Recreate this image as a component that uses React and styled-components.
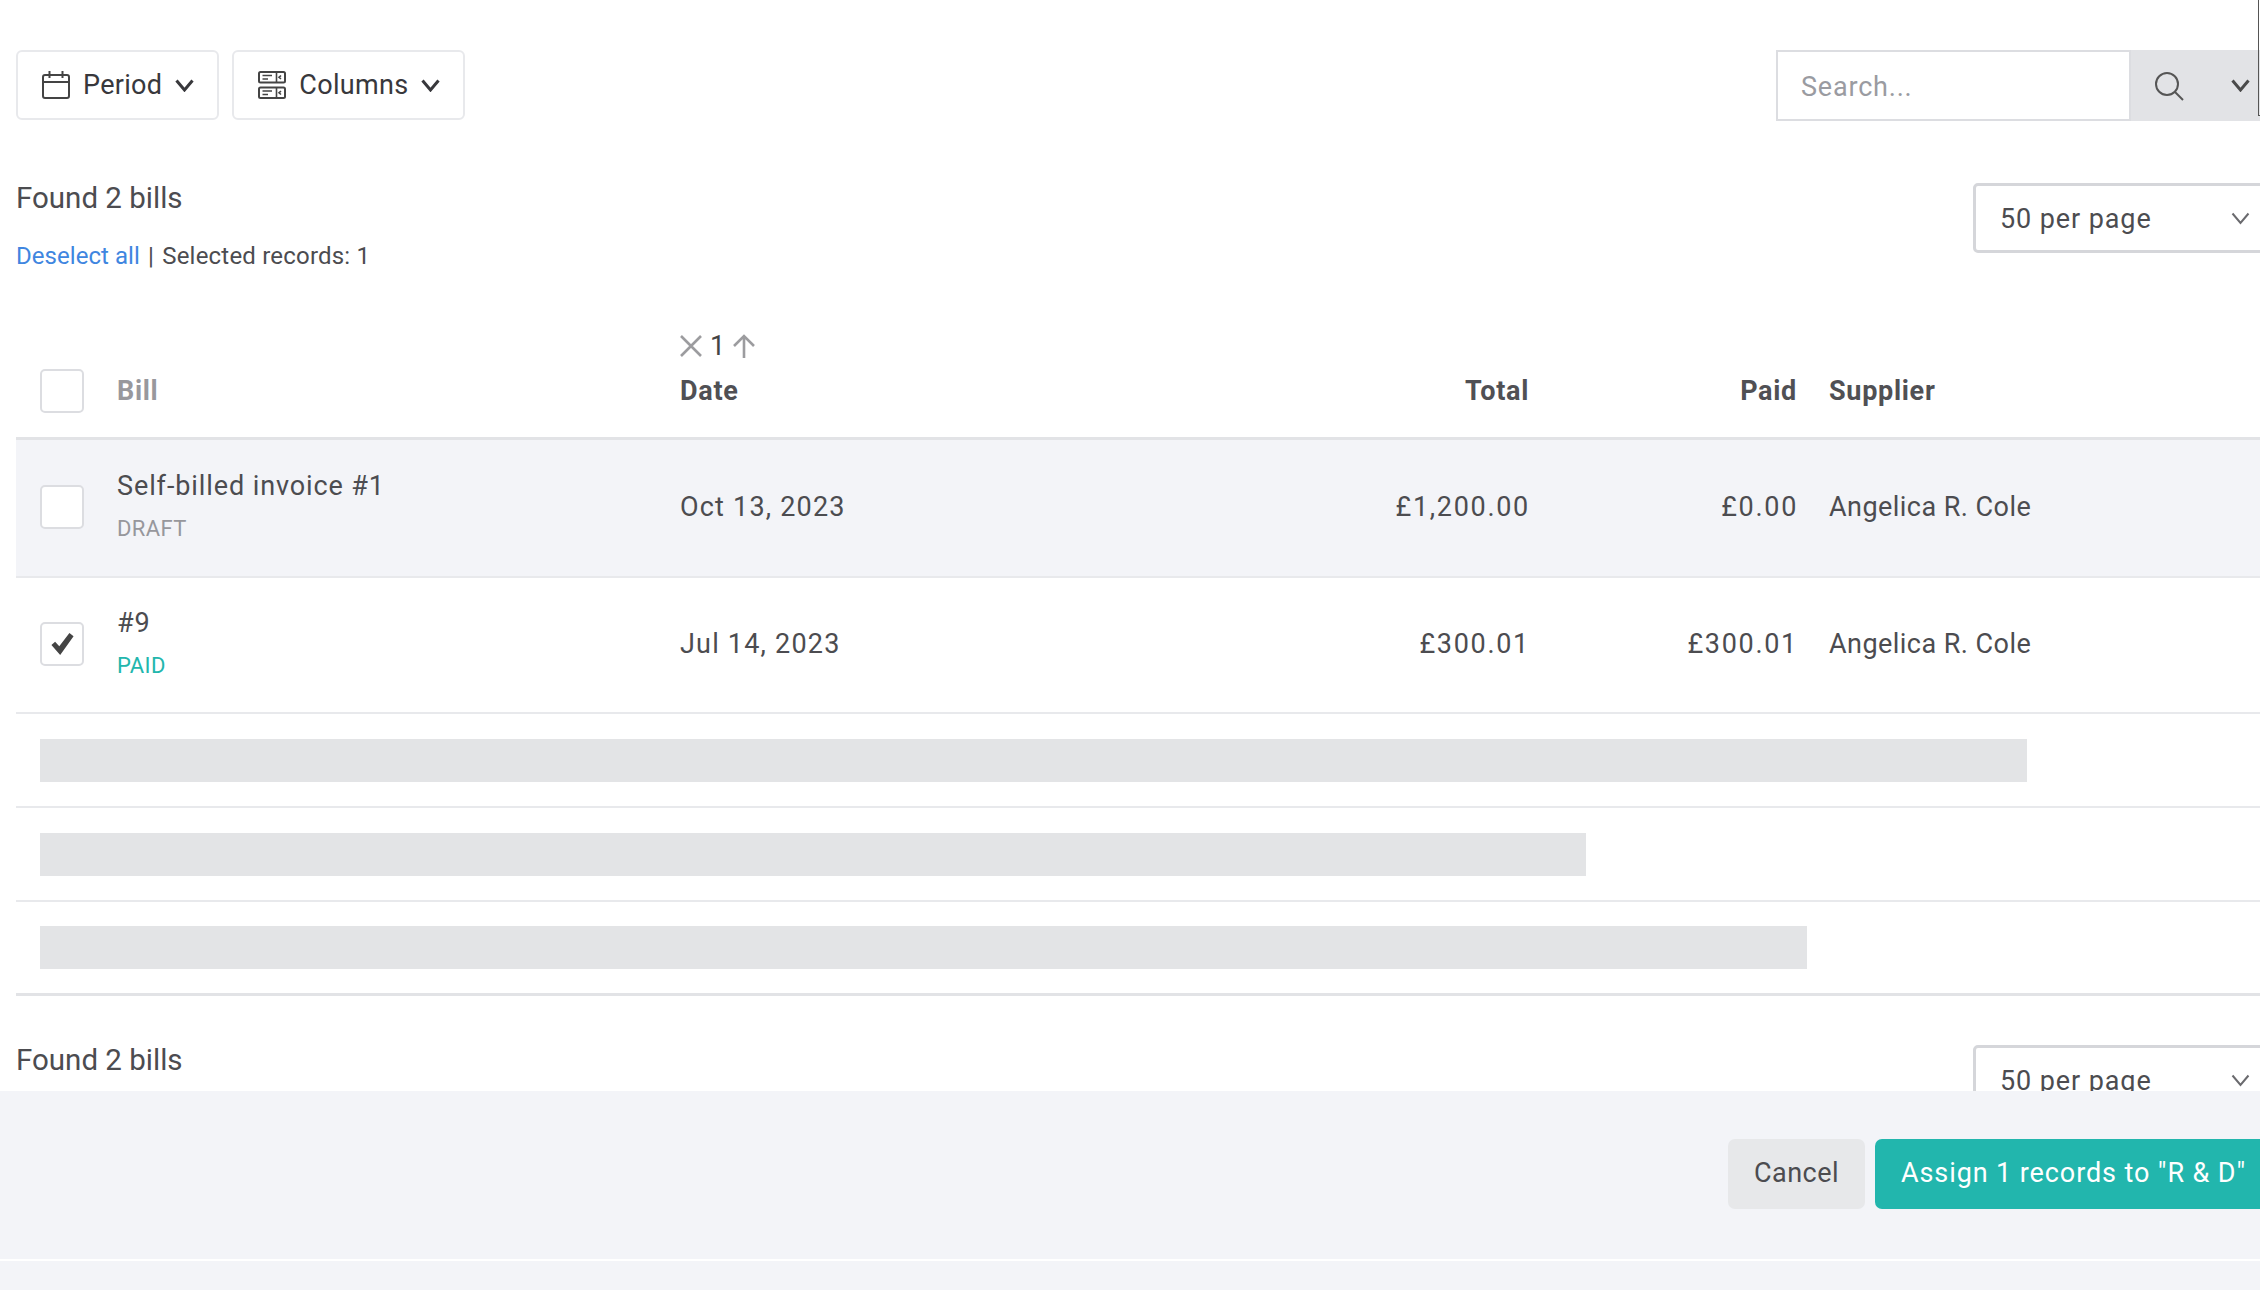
import styled, { createGlobalStyle } from "styled-components"

const GlobalStyle = createGlobalStyle`
  html, body {
    margin: 0;
    padding: 0;
    width: 2260px;
    height: 1290px;
    overflow: hidden;
    background: #f3f4f8;
    font-family: Roboto, "Liberation Sans", sans-serif;
    color: #4c4c50;
  }
  * { box-sizing: border-box; }
`

const COLUMNS = "84px 563px 436px 445px 268px 1fr"

const Page = styled.div`
  position: relative;
  width: 2260px;
  height: 1290px;
  display: flex;
  flex-direction: column;
  overflow: hidden;
`

const Content = styled.div`
  height: 1091px;
  padding: 50px 0 0 16px;
  background: #fff;
  overflow: hidden;
`

const Toolbar = styled.div`
  display: flex;
  justify-content: space-between;
  align-items: flex-start;
  height: 71px;
`

const ToolbarLeft = styled.div`
  display: flex;
  gap: 13px;
`

const FilterButton = styled.button`
  display: flex;
  align-items: center;
  gap: 13px;
  height: 70px;
  padding: 0 23px 0 24px;
  border: 2px solid #e8e9ec;
  border-radius: 6px;
  background: #fff;
  color: #38383c;
  font: 400 27px Roboto, sans-serif;
  letter-spacing: 0.3px;
`

const SearchGroup = styled.div`
  display: flex;
  width: 484px;
  height: 71px;
`

const SearchInput = styled.div`
  width: 355px;
  padding-left: 23px;
  border: 2px solid #dcdde1;
  background: #fff;
  color: #9a9ba1;
  font-size: 27px;
  letter-spacing: 0.8px;
  line-height: 71px;
`

const SearchAddon = styled.div`
  flex: 1;
  display: flex;
  align-items: center;
  gap: 47px;
  padding-left: 23px;
  background: #e2e3e6;
`

const EdgeMark = styled.div`
  position: absolute;
  top: 0;
  right: 0;
  width: 2px;
  height: 116px;
  border-left: 1px solid #555;
  border-bottom: 1px solid #555;
`

const SummaryRow = styled.div`
  display: flex;
  justify-content: space-between;
  align-items: flex-start;
  margin-top: ${(props) => props.$top}px;
`

const Found = styled.div`
  font-size: 29.5px;
  line-height: 36px;
  margin-top: ${(props) => props.$top}px;
`

const Selection = styled.div`
  margin-top: 25px;
  font-size: 24px;
  line-height: 30px;
  letter-spacing: 0.2px;
`

const LinkText = styled.a`
  color: #3f86e0;
  letter-spacing: 0.05px;
`

const Pipe = styled.span`
  margin: 0 2px;
`

const PageSelect = styled.div`
  display: flex;
  align-items: center;
  justify-content: space-between;
  flex-shrink: 0;
  width: 300px;
  height: 70px;
  margin-right: -13px;
  padding: 0 20px 0 24px;
  border: 3px solid #d5d6da;
  border-radius: 5px;
  background: #fff;
  font-size: 27px;
  letter-spacing: 0.9px;
`

const PageSelectLabel = styled.span`
  margin-top: 2px;
`

const TableWrap = styled.div`
  margin-top: 49px;
`

const HeaderRow = styled.div`
  display: grid;
  grid-template-columns: ${COLUMNS};
  align-items: end;
  height: 120px;
  padding-bottom: 24px;
  border-bottom: 3px solid #e2e3e6;
`

const HeadCell = styled.div`
  padding: 0 ${(props) => (props.$right ? "15px" : "0")} 0 ${(props) => (props.$right ? "0" : "17px")};
  font-size: 27px;
  font-weight: 700;
  letter-spacing: 0.7px;
  line-height: 44px;
  text-align: ${(props) => (props.$right ? "right" : "left")};
  color: ${(props) => (props.$muted ? "#98989d" : "#505054")};
`

const SortInfo = styled.div`
  display: flex;
  align-items: center;
  gap: 8px;
  height: 24px;
  margin-bottom: 11px;
  font-size: 27px;
  font-weight: 400;
  letter-spacing: 0;
  color: #444;
`

const CheckCell = styled.div`
  display: flex;
  align-items: center;
  padding-left: 24px;
`

const Checkbox = styled.div`
  display: flex;
  align-items: center;
  justify-content: center;
  width: 44px;
  height: 44px;
  border: 2px solid #dcdde1;
  border-radius: 5px;
  background: #fff;
`

const BodyRow = styled.div`
  display: grid;
  grid-template-columns: ${COLUMNS};
  align-items: center;
  height: ${(props) => props.$height}px;
  padding-bottom: 2px;
  border-bottom: 2px solid #e8e9ec;
  background: ${(props) => (props.$shaded ? "#f3f4f8" : "#fff")};
`

const Cell = styled.div`
  padding: 0 ${(props) => (props.$right ? "14px" : "0")} 0 ${(props) => (props.$right ? "0" : "17px")};
  font-size: 27px;
  letter-spacing: ${(props) => props.$tracking}px;
  text-align: ${(props) => (props.$right ? "right" : "left")};
`

const BillName = styled.div`
  line-height: 32px;
  letter-spacing: 0.9px;
`

const BillStatus = styled.div`
  margin-top: 11px;
  font-size: 22px;
  line-height: 32px;
  letter-spacing: 0.4px;
  color: ${(props) => (props.$paid ? "#22b6ad" : "#97979c")};
`

const SkeletonRow = styled.div`
  display: flex;
  align-items: center;
  height: 94px;
  padding-left: 24px;
  border-bottom: ${(props) => (props.$last ? "3px solid #e2e3e6" : "2px solid #e8e9ec")};
`

const SkeletonBar = styled.div`
  width: ${(props) => props.$width}px;
  height: 43px;
  background: #e3e4e6;
`

const Footer = styled.div`
  display: flex;
  justify-content: flex-end;
  align-items: flex-start;
  gap: 10px;
  height: 170px;
  padding-top: 48px;
  border-bottom: 2px solid #fff;
  background: #f3f4f8;
  overflow: hidden;
`

const CancelButton = styled.button`
  height: 70px;
  width: 137px;
  padding: 0 0 2px;
  border: 0;
  border-radius: 7px;
  background: #e7e8ea;
  color: #4c4c50;
  font: 400 27px Roboto, sans-serif;
  letter-spacing: 0.5px;
`

const AssignButton = styled.button`
  flex-shrink: 0;
  height: 70px;
  width: 396px;
  margin-right: -11px;
  padding: 0 0 2px 26px;
  border: 0;
  border-radius: 7px;
  background: #22b6ad;
  color: #fff;
  text-align: left;
  font: 400 27px Roboto, sans-serif;
  letter-spacing: 0.9px;
`

const Chevron = ({ color = "#38383c", stroke = 3 }) => (
  <svg width="19" height="13" viewBox="0 0 19 13" fill="none">
    <path d="M1.5 1.5L9.5 11L17.5 1.5" stroke={color} strokeWidth={stroke} />
  </svg>
)

const CalendarIcon = () => (
  <svg width="28" height="28" viewBox="0 0 28 28" fill="none" stroke="#444" strokeWidth="2">
    <rect x="1" y="4" width="26" height="23" rx="2" />
    <path d="M1 11H27M7.5 0V7M20.5 0V7" />
  </svg>
)

const ColumnsIcon = () => (
  <svg width="28" height="28" viewBox="0 0 28 28" fill="none" stroke="#444" strokeWidth="2">
    <rect x="1" y="1" width="26" height="10.5" rx="1.5" />
    <rect x="1" y="16.5" width="26" height="10.5" rx="1.5" />
    <path d="M18.5 1V11.5M18.5 16.5V27M4.5 4.5H14M4.5 8H10M4.5 20H14M4.5 23.5H10M23 4.5L21 6.3L23 8M23 20L21 21.8L23 23.5" strokeWidth="1.6" />
  </svg>
)

const SearchIcon = () => (
  <svg width="30" height="30" viewBox="0 0 30 30" fill="none" stroke="#555" strokeWidth="2">
    <circle cx="13" cy="13" r="11" />
    <path d="M21 21L29 29" />
  </svg>
)

const CloseIcon = () => (
  <svg width="22" height="22" viewBox="0 0 22 22" fill="none" stroke="#9c9c9f" strokeWidth="2.6">
    <path d="M1 1L21 21M21 1L1 21" />
  </svg>
)

const ArrowUpIcon = () => (
  <svg width="22" height="24" viewBox="0 0 22 24" fill="none" stroke="#9c9c9f" strokeWidth="2.6">
    <path d="M11 24V2M1 12L11 2L21 12" />
  </svg>
)

const CheckMark = () => (
  <svg width="27" height="24" viewBox="0 0 26 26">
    <path d="M1 14L5 10.5L9.5 15.5L20.5 1L25 4.5L10.5 25Z" fill="#444" />
  </svg>
)

const skeletons = [1987, 1546, 1767]

const bills = [
  { name: "Self-billed invoice #1", status: "DRAFT", date: "Oct 13, 2023", total: "£1,200.00", paid: "£0.00", shaded: true, height: 138 },
  { name: "#9", status: "PAID", date: "Jul 14, 2023", total: "£300.01", paid: "£300.01", checked: true, height: 136 },
]

export default function App() {
  return (
    <Page>
      <GlobalStyle />
      <Content>
        <Toolbar>
          <ToolbarLeft>
            <FilterButton>
              <CalendarIcon />
              Period
              <Chevron />
            </FilterButton>
            <FilterButton>
              <ColumnsIcon />
              Columns
              <Chevron />
            </FilterButton>
          </ToolbarLeft>
          <SearchGroup>
            <SearchInput>Search...</SearchInput>
            <SearchAddon>
              <SearchIcon />
              <Chevron color="#4a4a4a" />
            </SearchAddon>
          </SearchGroup>
        </Toolbar>

        <SummaryRow $top={62}>
          <div>
            <Found $top={-3}>Found 2 bills</Found>
            <Selection>
              <LinkText>Deselect all</LinkText> <Pipe>|</Pipe> Selected records: 1
            </Selection>
          </div>
          <PageSelect>
            <PageSelectLabel>50 per page</PageSelectLabel>
            <Chevron color="#6a6a6e" stroke={2} />
          </PageSelect>
        </SummaryRow>

        <TableWrap>
          <HeaderRow>
            <CheckCell>
              <Checkbox />
            </CheckCell>
            <HeadCell $muted>Bill</HeadCell>
            <HeadCell>
              <SortInfo>
                <CloseIcon />1<ArrowUpIcon />
              </SortInfo>
              Date
            </HeadCell>
            <HeadCell $right>Total</HeadCell>
            <HeadCell $right>Paid</HeadCell>
            <HeadCell>Supplier</HeadCell>
          </HeaderRow>

          {bills.map((bill) => (
            <BodyRow key={bill.name} $shaded={bill.shaded} $height={bill.height}>
              <CheckCell>
                <Checkbox>{bill.checked && <CheckMark />}</Checkbox>
              </CheckCell>
              <Cell>
                <BillName>{bill.name}</BillName>
                <BillStatus $paid={bill.status === "PAID"}>{bill.status}</BillStatus>
              </Cell>
              <Cell $tracking={1.2}>{bill.date}</Cell>
              <Cell $right $tracking={1.7}>{bill.total}</Cell>
              <Cell $right $tracking={1.7}>{bill.paid}</Cell>
              <Cell $tracking={0.45}>Angelica R. Cole</Cell>
            </BodyRow>
          ))}

          {skeletons.map((width, i) => (
            <SkeletonRow key={width} $last={i === skeletons.length - 1}>
              <SkeletonBar $width={width} />
            </SkeletonRow>
          ))}
        </TableWrap>

        <SummaryRow $top={49}>
          <Found $top={-3}>Found 2 bills</Found>
          <PageSelect>
            <PageSelectLabel>50 per page</PageSelectLabel>
            <Chevron color="#6a6a6e" stroke={2} />
          </PageSelect>
        </SummaryRow>
      </Content>

      <Footer>
        <CancelButton>Cancel</CancelButton>
        <AssignButton>Assign 1 records to "R &amp; D"</AssignButton>
      </Footer>
      <EdgeMark />
    </Page>
  )
}
